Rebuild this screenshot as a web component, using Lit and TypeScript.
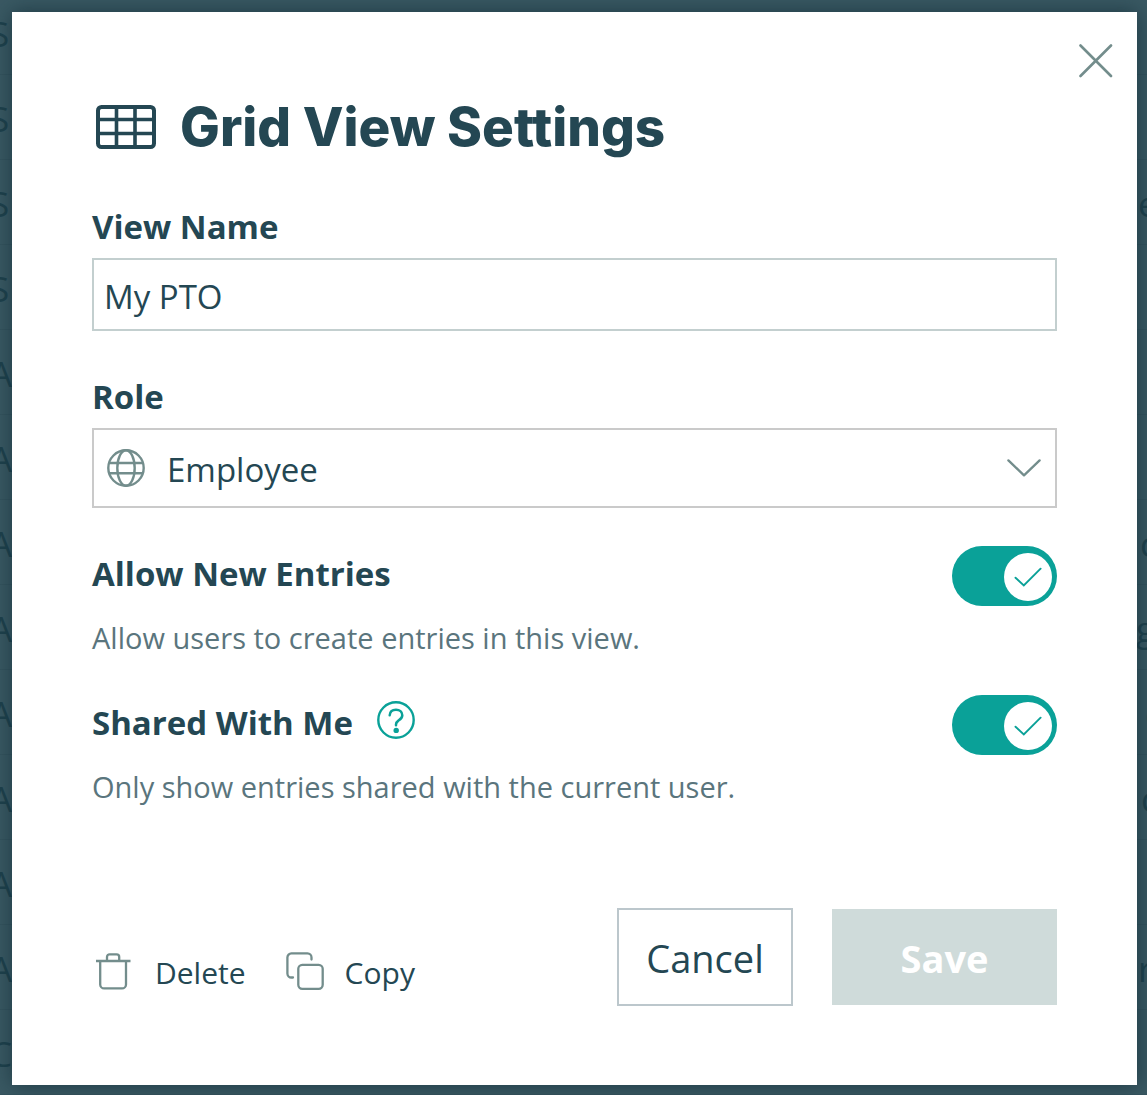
import { LitElement, html, css, svg } from "lit";
import { customElement, property, state } from "lit/decorators.js";

const gridIcon = svg`<svg class="icon-grid" viewBox="0 0 60 44" width="60" height="44" fill="none" stroke="currentColor" aria-hidden="true">
  <rect x="2" y="2" width="56" height="40" rx="3.5" stroke-width="4" />
  <path d="M20.5 2V42M39 2V42M2 14.5H58M2 28.5H58" stroke-width="3.6" />
</svg>`;

const closeIcon = svg`<svg viewBox="0 0 34 34" width="34" height="34" fill="none" stroke="currentColor" stroke-width="2.6" stroke-linecap="round" aria-hidden="true">
  <path d="M1.5 1.5L32 32M32 1.5L1.5 32" />
</svg>`;

const globeIcon = svg`<svg class="globe" viewBox="0 0 38 38" width="38" height="38" fill="none" stroke="currentColor" stroke-width="2.4" aria-hidden="true">
  <circle cx="19" cy="19" r="17.7" />
  <ellipse cx="19" cy="19" rx="8.7" ry="17.7" />
  <path d="M2.4 14H35.6M2.4 24.3H35.6" />
</svg>`;

const chevronIcon = svg`<svg class="chevron" viewBox="0 0 34 18" width="34" height="18" fill="none" stroke="currentColor" stroke-width="2.3" stroke-linecap="round" stroke-linejoin="round" aria-hidden="true">
  <path d="M1.4 1.4L17 16.4L32.6 1.4" />
</svg>`;

const checkIcon = svg`<svg class="check" viewBox="0 0 28 20" width="28" height="20" fill="none" stroke="currentColor" stroke-width="1.9" stroke-linecap="round" aria-hidden="true">
  <path d="M1.5 10.7L9.8 18.4L26.6 1.7" />
</svg>`;

const helpIcon = svg`<svg viewBox="0 0 38 38" width="38" height="38" fill="none" stroke="currentColor" aria-hidden="true">
  <circle cx="19" cy="19" r="17.7" stroke-width="2.4" />
  <path d="M12.7 14.3C12.9 10.7 15.5 8.7 19 8.7C22.6 8.7 25.3 10.9 25.3 14.2C25.3 17.2 23.3 18.4 21.4 19.6C19.8 20.7 19 21.6 19 23.6V24.2" stroke-width="2.5" stroke-linecap="round" />
  <circle cx="19.2" cy="29.4" r="2.7" fill="currentColor" stroke="none" />
</svg>`;

const trashIcon = svg`<svg class="tool-icon" viewBox="0 0 42 38" width="42" height="38" fill="none" stroke="currentColor" stroke-width="2.3" aria-hidden="true">
  <path d="M4 9H38.5M15 9V5A2.6 2.6 0 0 1 17.6 2.4H24.6A2.6 2.6 0 0 1 27.2 5V9" />
  <path d="M8.2 9V32.4A4 4 0 0 0 12.2 36.4H30A4 4 0 0 0 34 32.4V9" />
</svg>`;

const copyIcon = svg`<svg class="tool-icon" viewBox="0 0 38 38" width="38" height="38" fill="none" stroke="currentColor" stroke-width="2.3" stroke-linecap="round" aria-hidden="true">
  <rect x="12.3" y="12.8" width="24.4" height="24" rx="4" />
  <path d="M25.5 7.6V5.4A4 4 0 0 0 21.5 1.4H5.4A4 4 0 0 0 1.4 5.4V21.5A4 4 0 0 0 5.4 25.5H7" />
</svg>`;

interface BackdropRow {
  start: string;
  end?: string;
  shift?: number;
}

const backdropRows: BackdropRow[] = [
  { start: "S" },
  { start: "S" },
  { start: "S", end: "e", shift: 0 },
  { start: "S" },
  { start: "A" },
  { start: "A" },
  { start: "A", end: "c", shift: 2 },
  { start: "A", end: "g", shift: -2 },
  { start: "A", end: "c", shift: 7 },
  { start: "A", end: "c", shift: 3 },
  { start: "A" },
  { start: "A", end: "r", shift: 0 },
  { start: "C" },
];

@customElement("toggle-setting")
class ToggleSetting extends LitElement {
  @property() label = "";
  @property() description = "";
  @property({ type: Boolean }) help = false;
  @property({ type: Boolean }) checked = false;

  static styles = css`
    :host {
      display: block;
    }
    .row {
      display: flex;
      justify-content: space-between;
      align-items: flex-start;
    }
    .heading {
      display: flex;
      gap: 24px;
    }
    .label {
      font-size: 33px;
      line-height: 56px;
      font-weight: 700;
      color: #244753;
    }
    .help {
      display: flex;
      margin-top: 6px;
      height: 38px;
      padding: 0;
      border: 0;
      background: none;
      color: #0aa198;
    }
    .switch {
      display: grid;
      flex: none;
      width: 105px;
      height: 60px;
    }
    .input {
      grid-area: 1 / 1;
      appearance: none;
      margin: 0;
      border-radius: 30px;
      background: #8fa5a8;
    }
    .knob {
      grid-area: 1 / 1;
      display: flex;
      align-items: center;
      justify-content: center;
      align-self: center;
      width: 48px;
      height: 48px;
      margin: 2px 5px 0;
      border-radius: 50%;
      background: #fff;
      color: #0aa198;
      pointer-events: none;
    }
    .check {
      visibility: hidden;
    }
    .input:checked {
      background: #0aa198;
    }
    .input:checked + .knob {
      justify-self: end;
    }
    .input:checked + .knob .check {
      visibility: visible;
    }
    .description {
      margin: 12px 0 0;
      font-size: 29px;
      line-height: 40px;
      color: #5a757d;
    }
  `;

  render() {
    return html`
      <div class="row">
        <div class="heading">
          <label class="label" for="toggle">${this.label}</label>
          ${this.help
            ? html`<button class="help" type="button" aria-label="Help">${helpIcon}</button>`
            : null}
        </div>
        <div class="switch">
          <input
            class="input"
            id="toggle"
            type="checkbox"
            role="switch"
            aria-describedby="description"
            .checked=${this.checked}
          />
          <span class="knob">${checkIcon}</span>
        </div>
      </div>
      <p class="description" id="description">${this.description}</p>
    `;
  }
}

@customElement("app-root")
class AppRoot extends LitElement {
  @state() private viewName = "My PTO";

  static styles = css`
    :host {
      display: block;
      position: relative;
      box-sizing: border-box;
      min-height: 100vh;
      padding: 12px 10px 10px 12px;
      overflow: hidden;
      background: #3a5963;
      font-family: "Segoe UI", "Open Sans", "Noto Sans", sans-serif;
      color: #244753;
    }
    .backdrop {
      position: absolute;
      inset: -10px 0 0;
      overflow: hidden;
      color: #1f424d;
      font-size: 35px;
      font-weight: 500;
      line-height: 88px;
    }
    .backdrop-row {
      display: flex;
      justify-content: space-between;
      height: 84px;
      border-bottom: 1px solid #35545e;
    }
    .backdrop-start {
      margin-left: -10px;
    }
    .backdrop-end {
      width: 9px;
      white-space: nowrap;
    }
    .dialog {
      position: relative;
      display: flex;
      flex-direction: column;
      box-sizing: border-box;
      min-height: calc(100vh - 22px);
      padding: 85px 80px 79px;
      background: #fff;
      box-shadow: 0 0 20px rgba(10, 35, 45, 0.6);
    }
    .close {
      position: absolute;
      top: 24px;
      right: 16px;
      display: flex;
      padding: 8px;
      border: 0;
      background: none;
      color: #738d8c;
    }
    .title {
      display: flex;
      align-items: center;
      gap: 24px;
      margin: 0 0 46px;
      padding-left: 4px;
      font-family: Gilroy, Inter, sans-serif;
      font-size: 53px;
      line-height: 60px;
      font-weight: 800;
    }
    .field {
      display: flex;
      flex-direction: column;
      gap: 7px;
    }
    .field-label {
      font-size: 33px;
      line-height: 48px;
      font-weight: 700;
    }
    .text-input,
    .select {
      box-sizing: border-box;
      width: 100%;
      border: 2px solid #c3cfcf;
      border-radius: 0;
      background: #fff;
      color: inherit;
      font: inherit;
      font-size: 33px;
    }
    .text-input {
      height: 73px;
      padding: 3px 10px 0;
      margin-bottom: 42px;
    }
    .select-wrap {
      display: grid;
      align-items: center;
      margin-bottom: 38px;
      color: #738d8c;
    }
    .select {
      grid-area: 1 / 1;
      appearance: none;
      height: 80px;
      padding: 2px 60px 0 73px;
      border-color: #cacaca;
      color: #244753;
    }
    .globe,
    .chevron {
      grid-area: 1 / 1;
      z-index: 1;
      pointer-events: none;
    }
    .globe {
      margin-left: 15px;
    }
    .chevron {
      justify-self: end;
      margin-right: 16px;
    }
    .settings {
      display: flex;
      flex-direction: column;
      gap: 37px;
      margin-bottom: 101px;
    }
    .footer {
      display: flex;
      justify-content: space-between;
      align-items: center;
      margin-top: auto;
    }
    .tools {
      display: flex;
      align-self: flex-end;
      gap: 40px;
      margin-bottom: 12px;
    }
    .tool {
      display: flex;
      align-items: center;
      gap: 21px;
      padding: 0;
      border: 0;
      background: none;
      color: #738d8c;
      font: inherit;
      font-size: 30px;
      line-height: 40px;
    }
    .tool-icon {
      margin-bottom: 4px;
    }
    .tool-label {
      color: #244753;
    }
    .actions {
      display: flex;
      align-items: center;
      gap: 39px;
    }
    .cancel,
    .save {
      box-sizing: border-box;
      padding: 2px 0 0;
      font: inherit;
      font-size: 38px;
      line-height: 52px;
      border-radius: 0;
    }
    .cancel {
      width: 176px;
      height: 98px;
      border: 2px solid #bcc7cc;
      background: #fff;
      color: #244753;
    }
    .save {
      width: 225px;
      height: 96px;
      border: 0;
      background: #cfdbda;
      color: #fff;
      font-weight: 700;
    }
  `;

  render() {
    return html`
      <div class="backdrop" aria-hidden="true">
        ${backdropRows.map(
          (row) => html`<div class="backdrop-row">
            <span class="backdrop-start">${row.start}</span>
            <span class="backdrop-end" style="text-indent: ${row.shift ?? 0}px">${row.end ?? ""}</span>
          </div>`,
        )}
      </div>
      <form class="dialog" role="dialog" aria-labelledby="title" @submit=${(e: Event) => e.preventDefault()}>
        <button class="close" type="button" aria-label="Close">${closeIcon}</button>
        <h1 class="title" id="title">${gridIcon}<span>Grid View Settings</span></h1>
        <div class="field">
          <label class="field-label" for="view-name">View Name</label>
          <input
            class="text-input"
            id="view-name"
            type="text"
            .value=${this.viewName}
            @input=${(e: Event) => (this.viewName = (e.target as HTMLInputElement).value)}
          />
        </div>
        <div class="field">
          <label class="field-label" for="role">Role</label>
          <div class="select-wrap">
            <select class="select" id="role">
              <option>Employee</option>
            </select>
            ${globeIcon}${chevronIcon}
          </div>
        </div>
        <div class="settings">
          <toggle-setting
            label="Allow New Entries"
            description="Allow users to create entries in this view."
            checked
          ></toggle-setting>
          <toggle-setting
            label="Shared With Me"
            description="Only show entries shared with the current user."
            help
            checked
          ></toggle-setting>
        </div>
        <div class="footer">
          <div class="tools">
            <button class="tool" type="button">${trashIcon}<span class="tool-label">Delete</span></button>
            <button class="tool" type="button">${copyIcon}<span class="tool-label">Copy</span></button>
          </div>
          <div class="actions">
            <button class="cancel" type="button">Cancel</button>
            <button class="save" type="submit" disabled>Save</button>
          </div>
        </div>
      </form>
    `;
  }
}
